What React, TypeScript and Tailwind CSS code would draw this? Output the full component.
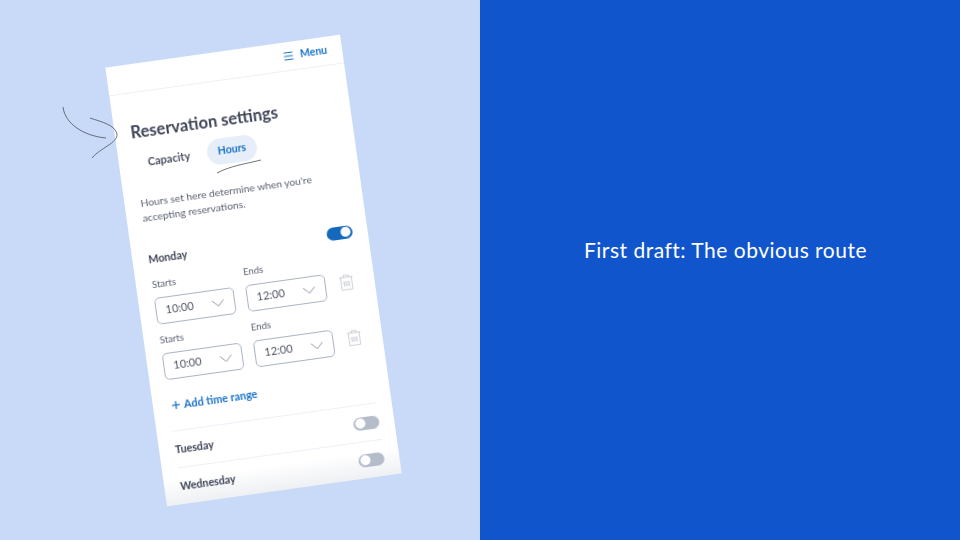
import React from 'react';
import { ChevronDown, Menu, Plus } from 'lucide-react';

function Toggle({ on = false }: { on?: boolean }) {
  return (
    <div className={on ? 'flex h-[13px] w-[26px] items-center justify-end rounded-full bg-[#1469bd] px-[2px]' : 'flex h-[13px] w-[26px] items-center rounded-full bg-[#b5bdcb] px-[2px]'}>
      <div className="h-[10px] w-[10px] rounded-full bg-white" />
    </div>
  );
}

function TimeField({ label, value }: { label: string; value: string }) {
  return (
    <div className="w-[80px]">
      <div className="h-[12px] text-[9.5px] leading-[12px] text-[#5a6072]">{label}</div>
      <div className="mt-[7px] flex h-[27px] items-center justify-between rounded-[5px] border border-[#aab3c4] pl-[9px] pr-[5px] text-[11px] text-[#4d5364]">
        <span>{value}</span>
        <ChevronDown className="h-[22px] w-[22px] text-[#7d8494]" strokeWidth={1} />
      </div>
    </div>
  );
}

function TrashIcon() {
  return (
    <svg viewBox="0 0 14 16" className="ml-[14px] mt-[22px] h-[16px] w-[14px] text-[#a9afbc]" fill="none" stroke="currentColor" strokeWidth="0.6">
      <path d="M0.3 3h13.4M4.5 3V1h5v2M1.6 3v12.4h10.8V3" />
      <path d="M4.4 7v5M6.1 7v5M7.9 7v5M9.6 7v5" />
    </svg>
  );
}

function TimeRange() {
  return (
    <div className="flex">
      <TimeField label="Starts" value="10:00" />
      <div className="w-[12px]" />
      <TimeField label="Ends" value="12:00" />
      <TrashIcon />
    </div>
  );
}

function DayRow({ day }: { day: string }) {
  return (
    <div className="flex h-[36px] items-center justify-between">
      <span className="text-[10.7px] font-bold text-[#3f4557]">{day}</span>
      <Toggle />
    </div>
  );
}

export default function App() {
  return (
    <div className="flex h-[540px] w-[960px] overflow-hidden font-['Lato',sans-serif]">
      <div className="relative flex w-[480px] items-center justify-center bg-[#c9daf8]">
        <div className="relative ml-[26px] h-[443px] w-[237px] shrink-0 rotate-[-8deg] overflow-hidden bg-white blur-[0.35px]">
          <div className="absolute inset-x-0 bottom-0 h-[26px] bg-gradient-to-t from-[#eef0f3] to-transparent" />
          <div className="relative flex h-[29px] items-center justify-end gap-[6px] border-b border-[#eef0f4] pr-[15px] text-[#1a73c8]">
            <Menu className="h-[12px] w-[12px]" strokeWidth={2.25} />
            <span className="text-[10.5px] font-bold">Menu</span>
          </div>
          <div className="relative pl-[16px] pr-[15px]">
            <h1 className="mt-[29px] text-[16.5px] font-bold leading-[20px] text-[#3f4557]">Reservation settings</h1>
            <div className="mt-[8px] flex h-[26px] items-center pl-[13px]">
              <span className="w-[60px] text-[11px] font-bold text-[#4a5062]">Capacity</span>
              <div className="flex h-[26px] w-[50px] items-center justify-center rounded-full bg-[#e6eef9] text-[10.5px] font-bold text-[#1a73c8]">
                Hours
              </div>
            </div>
            <p className="mt-[20px] text-[10.3px] leading-[15px] text-[#5a6072]">
              Hours set here determine when you're
              <br />
              accepting reservations.
            </p>
            <div className="mt-[24px] flex h-[20px] items-center justify-between">
              <span className="text-[10.7px] font-bold text-[#3f4557]">Monday</span>
              <Toggle on />
            </div>
            <div className="mt-[10px] flex flex-col gap-[10px]">
              <TimeRange />
              <TimeRange />
            </div>
            <div className="mt-[18px] flex h-[16px] items-center gap-[2px] pl-[1px] text-[#1a73c8]">
              <Plus className="h-[12px] w-[12px]" strokeWidth={2.5} />
              <span className="text-[10.9px] font-bold">Add time range</span>
            </div>
            <div className="mt-[17px] border-t border-[#eef0f6]">
              <DayRow day="Tuesday" />
            </div>
            <div className="border-t border-[#eef0f6]">
              <DayRow day="Wednesday" />
            </div>
          </div>
        </div>
        <svg viewBox="0 0 480 540" className="absolute inset-0 h-full w-full" fill="none" stroke="#4a4f5c" strokeWidth="0.8">
          <path d="M63 107C65 124 84 136 106 138" />
          <path d="M90 118C102 122 115 125 117 134C118 143 100 148 92 158" />
          <path d="M217 173C230 166 245 164 261 160" />
        </svg>
      </div>
      <div className="flex w-[480px] items-center justify-center bg-[#1155cc] pb-[40px] pl-[11px]">
        <span className="text-[21px] tracking-[0.5px] text-white">First draft: The obvious route</span>
      </div>
    </div>
  );
}
